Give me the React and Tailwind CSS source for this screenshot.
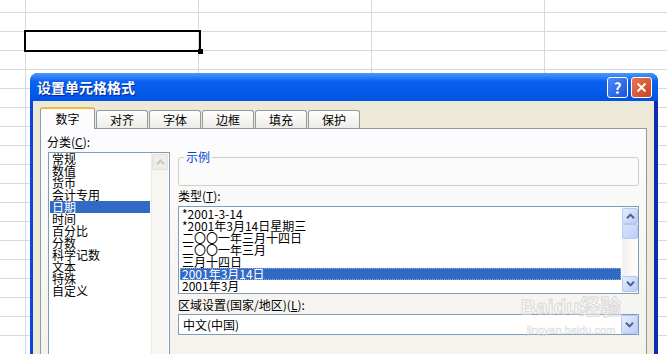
import React from 'react'

const FONT = "font-['Noto_Sans_CJK_SC','Noto_Sans',sans-serif]"

const categories = ['常规', '数值', '货币', '会计专用', '日期', '时间', '百分比', '分数', '科学记数', '文本', '特殊', '自定义']
const types = ['*2001-3-14', '*2001年3月14日星期三', '二〇〇一年三月十四日', '二〇〇一年三月', '三月十四日', '2001年3月14日', '2001年3月']
const tabs = ['数字', '对齐', '字体', '边框', '填充', '保护']

function Chevron({ dir = 'up', color = '#4D6185' }) {
  return (
    <svg width="9" height="6" viewBox="0 0 9 6">
      <path
        d={dir === 'up' ? 'M1 5.2 L4.5 1.6 L8 5.2' : 'M1 0.8 L4.5 4.4 L8 0.8'}
        fill="none"
        stroke={color}
        strokeWidth="2"
      />
    </svg>
  )
}

function ScrollBtn({ dir, disabled }) {
  if (disabled) {
    return (
      <div className="w-[16px] h-[16px] shrink-0 rounded-[2px] border border-[#E3E1D8] bg-[#EEEDE6] flex items-center justify-center">
        <Chevron dir={dir} color="#C9C7BA" />
      </div>
    )
  }
  return (
    <div className="w-[16px] h-[16px] shrink-0 rounded-[2px] border border-[#B4C7F0] bg-gradient-to-br from-[#E6EEFD] to-[#B8CCF7] flex items-center justify-center">
      <Chevron dir={dir} />
    </div>
  )
}

function Sheet() {
  const rows = Array.from({ length: 19 })
  const cols = ['w-[26px]', 'w-[173px]', 'w-[173px]', 'w-[173px]', 'w-[173px]']
  return (
    <div className="flex flex-col">
      {rows.map((_, i) => (
        <div key={i} className={`flex shrink-0 border-b border-[#D3DAE4] ${i === 0 ? 'h-[13px]' : 'h-[19px]'}`}>
          {cols.map((w, j) => (
            <div key={j} className={`${w} shrink-0 border-r border-[#D3DAE4]`} />
          ))}
        </div>
      ))}
    </div>
  )
}

function Dialog() {
  return (
    <div className="absolute left-[30px] top-[73px] w-[628px] h-[290px] flex flex-col rounded-t-[8px] overflow-hidden bg-[#0B46D8]">
      {/* title bar */}
      <div className="h-[28px] shrink-0 flex items-center justify-between pl-[7px] pr-[6px] bg-gradient-to-b from-[#4A98FC] via-[#0A62F0] via-30% to-[#0052E2]">
        <span className="text-white font-bold text-[14px] leading-none [text-shadow:1px_1px_0_#0A2A9A]">设置单元格格式</span>
        <div className="flex gap-[3px]">
          <div className="w-[21px] h-[21px] rounded-[3px] border border-white bg-gradient-to-br from-[#4D8BF8] to-[#1654D8] flex items-center justify-center text-white font-bold text-[15px] leading-none">?</div>
          <div className="w-[21px] h-[21px] rounded-[3px] border border-white bg-gradient-to-br from-[#EA7653] to-[#C9411D] flex items-center justify-center">
            <svg width="11" height="11" viewBox="0 0 11 11">
              <path d="M1.5 1.5 L9.5 9.5 M9.5 1.5 L1.5 9.5" stroke="white" strokeWidth="2" />
            </svg>
          </div>
        </div>
      </div>

      {/* body */}
      <div className="flex-1 flex flex-col bg-[#ECE9D8] border-l-[3px] border-l-[#0B46D8] border-r-[4px] border-r-[#0A2EAE] pt-[6px] pl-[7px] pr-[7px]">
        <div className="flex items-end gap-[1px] h-[22px] -mb-px relative z-10">
          {tabs.map((t, i) =>
            i === 0 ? (
              <div key={t} className="w-[55px] h-[22px] rounded-t-[3px] border border-b-0 border-[#919B9C] border-t-2 border-t-[#F7B93C] bg-[#FCFCFE] flex items-center justify-center text-[12px] leading-none">
                {t}
              </div>
            ) : (
              <div key={t} className="w-[52px] h-[18px] mb-px rounded-t-[3px] border border-b-0 border-[#919B9C] bg-gradient-to-b from-white to-[#ECEBE5] flex items-center justify-center text-[12px] leading-none">
                {t}
              </div>
            )
          )}
        </div>

        <div className="flex-1 flex border border-[#919B9C] bg-gradient-to-b from-[#FCFCFE] to-[#F3F2EC] pt-[7px] pl-[6px]">
          {/* left column */}
          <div className="flex flex-col w-[123px] shrink-0">
            <div className="text-[12px] leading-[12px] h-[12px]">分类(<u>C</u>):</div>
            <div className="ml-px mt-[4px] w-[122px] h-[220px] border border-[#7F9DB9] bg-white flex">
              <div className="flex-1 flex flex-col p-[1px] pt-0">
                {categories.map((c, i) => (
                  <div key={c} className={`h-[12px] leading-[12px] text-[12px] pl-[2px] ${i === 4 ? 'bg-[#316AC5] text-white' : ''}`}>
                    {c}
                  </div>
                ))}
              </div>
              <div className="w-[17px] flex flex-col bg-[#F7F6F2] border-l border-[#EDEBE3] pt-[1px] mr-px">
                <ScrollBtn dir="up" disabled />
              </div>
            </div>
          </div>

          {/* right column */}
          <div className="ml-[8px] w-[461px] flex flex-col mt-[15px]">
            <fieldset className="h-[35px] border border-[#D0D0BF] rounded-[3px] px-[5px]">
              <legend className="px-[2px] text-[12px] leading-[12px] text-[#0046D5]">示例</legend>
            </fieldset>
            <div className="mt-[4px] text-[12px] leading-[12px] h-[12px]">类型(<u>T</u>):</div>
            <div className="mt-[4px] h-[88px] border border-[#7F9DB9] bg-white flex">
              <div className="flex-1 flex flex-col p-[1px] pt-[1px]">
                {types.map((t, i) => (
                  <div key={t} className={`h-[12px] leading-[12px] text-[12px] pl-[2px] ${i === 5 ? 'bg-[#316AC5] text-white outline outline-1 outline-dotted outline-[#8FA8D8] -outline-offset-1' : ''}`}>
                    {t}
                  </div>
                ))}
              </div>
              <div className="w-[16px] flex flex-col justify-between bg-gradient-to-r from-[#F3F1EC] to-[#FEFEFB] py-[1px]">
                <div className="flex flex-col">
                  <ScrollBtn dir="up" />
                  <div className="w-[16px] h-[15px] rounded-[2px] border border-[#B4C7F0] bg-gradient-to-br from-[#D9E4FD] to-[#BBCFF8]" />
                </div>
                <ScrollBtn dir="down" />
              </div>
            </div>
            <div className="mt-[5px] text-[12px] leading-[12px] h-[12px]">区域设置(国家/地区)(<u>L</u>):</div>
            <div className="mt-[3px] h-[21px] border border-[#7F9DB9] bg-white flex items-center justify-between">
              <span className="pl-[4px] text-[12px] leading-none">中文(中国)</span>
              <div className="h-[19px] w-[17px] rounded-[2px] border border-[#B4C7F0] bg-gradient-to-br from-[#E6EEFD] to-[#B8CCF7] flex items-center justify-center">
                <Chevron dir="down" />
              </div>
            </div>
          </div>
        </div>
      </div>
    </div>
  )
}

export default function App() {
  return (
    <div className={`relative w-[667px] h-[354px] overflow-hidden bg-white text-black ${FONT}`}>
      <Sheet />

      {/* active cell */}
      <div className="absolute left-[24px] top-[30px] w-[177px] h-[22px] border-2 border-black">
        <div className="absolute -right-[4px] -bottom-[4px] w-[5px] h-[5px] bg-black" />
      </div>

      <Dialog />

      {/* watermark */}
      <div className="absolute left-[512px] top-[296px] w-[118px] flex flex-col items-center pointer-events-none text-white/40 [-webkit-text-stroke:1px_#DADADA] font-['Liberation_Sans','Noto_Sans_CJK_SC',sans-serif]">
        <span className="text-[21px] leading-[22px] font-bold whitespace-nowrap">Baidu经验</span>
        <span className="text-[11px] leading-[13px] mt-[6px] whitespace-nowrap [-webkit-text-stroke:0.5px_#DADADA]">jingyan.baidu.com</span>
      </div>
    </div>
  )
}
